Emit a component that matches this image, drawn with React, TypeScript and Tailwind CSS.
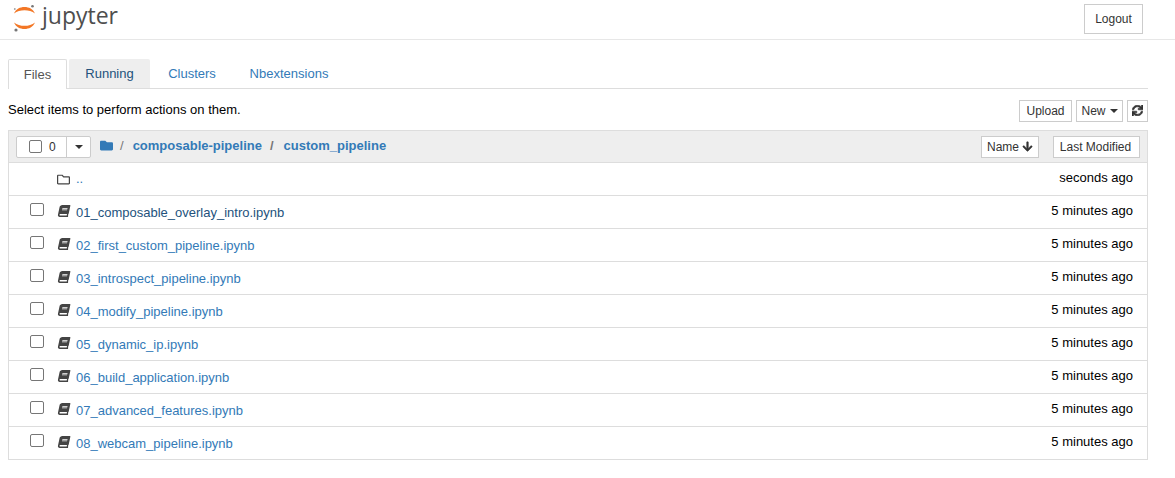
import { FaArrowDown, FaBook, FaFolder, FaRegFolder, FaSync } from "react-icons/fa";

const notebooks = [
  "01_composable_overlay_intro.ipynb",
  "02_first_custom_pipeline.ipynb",
  "03_introspect_pipeline.ipynb",
  "04_modify_pipeline.ipynb",
  "05_dynamic_ip.ipynb",
  "06_build_application.ipynb",
  "07_advanced_features.ipynb",
  "08_webcam_pipeline.ipynb",
];

function JupyterMark() {
  return (
    <svg width="24" height="29" viewBox="0 0 24 29" className="shrink-0">
      <path d="M1 10.500C3 6 7 4 11.500 4s8.500 2 10.500 6.500C19 8 15.500 7.200 11.500 7.200S4 8 1 10.500Z" fill="#f37726" />
      <path d="M1 19.500C3 24 7 26 11.500 26s8.500-2 10.500-6.500C19 22 15.500 22.800 11.500 22.800S4 22 1 19.500Z" fill="#f37726" />
      <circle cx="19.500" cy="3.200" r="1.300" fill="#767677" />
      <circle cx="1.800" cy="6" r="0.900" fill="#9e9e9e" />
      <circle cx="3" cy="27" r="1.600" fill="#767677" />
    </svg>
  );
}

function Btn({ children, className = "" }: { children: React.ReactNode; className?: string }) {
  return (
    <button className={`flex items-center justify-center border border-[#cccccc] bg-white text-[12px] text-[#333333] ${className}`}>
      {children}
    </button>
  );
}

function Row({ name, time, index }: { name: string; time: string; index: number }) {
  return (
    <div className="flex h-[33px] items-center border-t border-[#dddddd] pl-[21px] pr-[14px]">
      <span className="mt-[-5px] h-[13px] w-[14px] shrink-0 rounded-[2px] border border-[#767676] bg-white" />
      <FaBook className="ml-[14px] mt-[-2px] h-[12px] w-[12px] shrink-0 -skew-x-12 text-[#444444]" />
      <span className={`ml-[6px] mt-[1px] text-[13px] leading-[18px] ${index === 0 ? "text-[#23527c]" : "text-[#337ab7]"}`}>{name}</span>
      <span className="ml-auto mt-[-3px] text-[13px] text-black">{time}</span>
    </div>
  );
}

export default function App() {
  return (
    <div className="min-h-[478px] bg-white font-['Liberation_Sans',Arial,sans-serif] text-[13px] text-black">
      <header className="flex h-[40px] items-start border-b border-[#e7e7e7] pl-[13px] pr-[32px]">
        <div className="flex items-start pt-[3px]">
          <JupyterMark />
          <span className="ml-[5px] mt-[-4px] font-['Open_Sans',sans-serif] text-[23px] leading-[32px] text-[#4e4e4e]">jupyter</span>
        </div>
        <Btn className="ml-auto mt-[4px] h-[30px] w-[59px]">Logout</Btn>
      </header>

      <div className="mx-[8px] mt-[19px] w-[1140px]">
        <nav className="flex h-[30px] items-end border-b border-[#dddddd]">
          <div className="mb-[-1px] flex h-[30px] w-[59px] items-center justify-center rounded-t-[2px] border border-b-0 border-[#dddddd] bg-white pt-[1px] text-[#555555]">Files</div>
          <div className="ml-[2px] flex h-[29px] w-[81px] items-center justify-center rounded-t-[2px] bg-[#eeeeee] pt-[1px] text-[#23527c]">Running</div>
          <div className="ml-[2px] flex h-[29px] w-[80px] items-center justify-center pt-[1px] text-[#337ab7]">Clusters</div>
          <div className="ml-[3px] flex h-[29px] w-[108px] items-center justify-center pt-[1px] text-[#337ab7]">Nbextensions</div>
        </nav>

        <div className="flex h-[41px] items-center">
          <span className="mt-[1px]">Select items to perform actions on them.</span>
          <div className="ml-auto mt-[2px] flex">
            <Btn className="h-[22px] w-[53px]">Upload</Btn>
            <Btn className="ml-[4px] h-[22px] w-[47px] gap-[4px]">
              New
              <span className="mt-[1px] border-x-[4px] border-t-[4px] border-x-transparent border-t-[#333333]" />
            </Btn>
            <Btn className="ml-[4px] h-[22px] w-[21px]">
              <FaSync className="h-[11px] w-[11px]" stroke="currentColor" strokeWidth={30} />
            </Btn>
          </div>
        </div>

        <section className="border border-[#dddddd]">
          <div className="flex h-[31px] items-center bg-[#eeeeee] pl-[7px] pr-[7px]">
            <div className="flex h-[22px] w-[75px] rounded-[2px] border border-[#cccccc] bg-white">
              <div className="flex w-[49px] items-center pl-[12px] text-[12px] text-[#333333]">
                <span className="h-[13px] w-[13px] rounded-[2px] border border-[#767676]" />
                <span className="ml-[7px]">0</span>
              </div>
              <div className="flex flex-1 items-center justify-center border-l border-[#cccccc]">
                <span className="border-x-[4px] border-t-[4px] border-x-transparent border-t-[#333333]" />
              </div>
            </div>
            <div className="mt-[-1px] ml-[9px] flex items-center text-[13px] font-bold text-[#337ab7]">
              <FaFolder className="mt-[-2px] h-[13px] w-[13px]" />
              <span className="ml-[7px] font-normal text-[#777777]">/</span>
              <span className="ml-[9px]">composable-pipeline</span>
              <span className="ml-[8px] text-[#777777]">/</span>
              <span className="ml-[10px]">custom_pipeline</span>
            </div>
            <Btn className="ml-auto h-[22px] w-[58px] gap-[3px]">
              Name
              <FaArrowDown className="h-[11px] w-[11px]" stroke="currentColor" strokeWidth={20} />
            </Btn>
            <Btn className="ml-[14px] h-[22px] w-[87px] pr-[2px]">Last Modified</Btn>
          </div>

          <div className="flex h-[33px] items-center border-t border-[#dddddd] pl-[48px] pr-[14px]">
            <FaRegFolder className="h-[13px] w-[13px] text-[#444444]" />
            <span className="ml-[6px] text-[#337ab7]">..</span>
            <span className="ml-auto mt-[-3px]">seconds ago</span>
          </div>
          {notebooks.map((name, i) => (
            <Row key={name} name={name} time="5 minutes ago" index={i} />
          ))}
        </section>
      </div>
    </div>
  );
}
